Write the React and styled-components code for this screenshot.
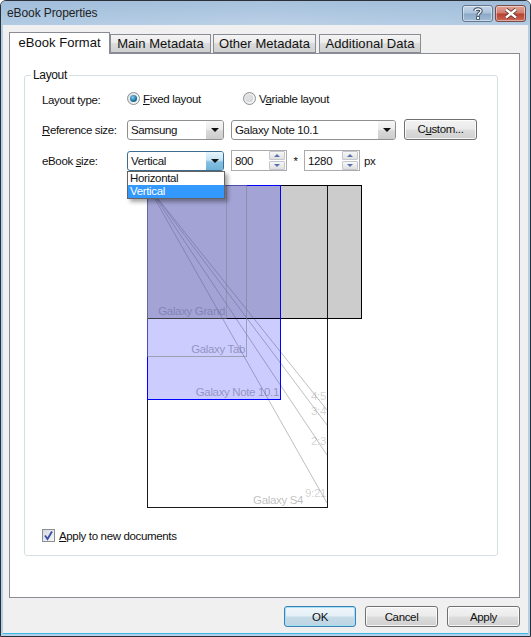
import React from 'react'
import styled, { createGlobalStyle } from 'styled-components'

const GlobalStyle = createGlobalStyle`
  html, body { margin: 0; padding: 0; background: #fff; }
  body { font-family: "Liberation Sans", Arial, sans-serif; font-size: 11.5px; letter-spacing: -0.35px; color: #111; }
  u { text-underline-offset: 1px; }
`

const Window = styled.div`
  width: 531px;
  height: 637px;
  box-sizing: border-box;
  display: flex;
  flex-direction: column;
  border: 1px solid #2b3036;
  border-radius: 6px 6px 0 0;
  background: #b4cfe8;
  overflow: hidden;
`

const TitleBar = styled.div`
  height: 24px;
  flex: none;
  display: flex;
  align-items: flex-start;
  justify-content: space-between;
  padding: 4px 4px 0 6px;
  box-sizing: border-box;
  background: linear-gradient(180deg, rgba(150, 180, 212, 0.5), rgba(190, 212, 232, 0.4)), linear-gradient(90deg, #a9c5e0 0%, #b8cfe5 50%, #a8c4df 100%);
`

const TitleText = styled.span`
  font-size: 12px;
  line-height: 17px;
  letter-spacing: -0.1px;
  color: #222;
`

const TitleButtons = styled.div`
  display: flex;
  gap: 2px;
`

const CaptionButton = styled.div`
  width: 31px;
  height: 17px;
  box-sizing: border-box;
  border: 1px solid ${p => (p.$close ? '#7a4a44' : '#66788c')};
  border-radius: 3px;
  box-shadow: inset 0 0 0 1px rgba(255, 255, 255, 0.45);
  display: flex;
  align-items: center;
  justify-content: center;
  background: ${p =>
    p.$close
      ? 'linear-gradient(180deg, #dfa599 0%, #cf7d6e 48%, #b8402f 52%, #c9695a 100%)'
      : 'linear-gradient(180deg, #c3d6e8 0%, #aac3dc 48%, #8ba8c6 52%, #a3bdd8 100%)'};
`

const Client = styled.div`
  flex: 1;
  min-height: 0;
  display: flex;
  flex-direction: column;
  margin: 0 2px 2px 2px;
  padding: 7px 8px 7px 6px;
  background: #f0f0f0;
  border-bottom: 1px solid #38b6e8;
`

const TabStrip = styled.div`
  display: flex;
  align-items: flex-end;
  height: 21px;
  flex: none;
`

const Tab = styled.div`
  width: ${p => p.$width}px;
  height: ${p => (p.$active ? 22 : 19)}px;
  margin-left: ${p => p.$offset || 0}px;
  margin-bottom: ${p => (p.$active ? -1 : 0)}px;
  padding-bottom: ${p => (p.$active ? 2 : 0)}px;
  box-sizing: border-box;
  display: flex;
  align-items: center;
  justify-content: center;
  position: relative;
  z-index: ${p => (p.$active ? 2 : 0)};
  font-size: 13px;
  letter-spacing: 0.05px;
  color: #111;
  border: 1px solid #898c95;
  border-bottom: ${p => (p.$active ? 'none' : '1px solid #898c95')};
  background: ${p => (p.$active ? '#fff' : 'linear-gradient(180deg, #f4f4f4 0%, #ebebeb 45%, #dcdcdc 50%, #cfcfcf 100%)')};
`

const Panel = styled.div`
  height: 545px;
  flex: none;
  box-sizing: border-box;
  padding: 14px 21px 0 14px;
  background: #fff;
  border: 1px solid #898c95;
`

const Group = styled.fieldset`
  margin: 0;
  padding: 0 0 0 17px;
  height: 488px;
  box-sizing: border-box;
  border: 1px solid #d5dfe5;
  border-radius: 3px;
  min-width: 0;
`

const GroupTitle = styled.legend`
  margin-left: -11px;
  padding: 0 2px;
  font-size: 12px;
  line-height: 14px;
`

const Row = styled.div`
  display: flex;
  align-items: center;
  height: 21px;
  margin-top: ${p => p.$top}px;
`

const Label = styled.div`
  width: 85px;
  flex: none;
  padding-top: ${p => p.$drop || 0}px;
`

const Option = styled.div`
  width: ${p => p.$width}px;
  display: flex;
  align-items: center;
  gap: 3px;
`

const Radio = styled.span`
  width: 13px;
  height: 13px;
  box-sizing: border-box;
  border-radius: 50%;
  border: 1px solid #8a8f96;
  display: flex;
  align-items: center;
  justify-content: center;
  background: linear-gradient(135deg, #ddd, #fafafa);
  &::after {
    content: '';
    width: 7px;
    height: 7px;
    border-radius: 50%;
    background: ${p => (p.$checked ? 'radial-gradient(circle at 40% 35%, #7fd0ef, #1a6d9c 60%, #0d4a78)' : 'radial-gradient(circle at 40% 35%, #e4e4e4, #cfcfcf)')};
  }
`

const Combo = styled.div`
  position: relative;
  width: ${p => p.$width}px;
  height: 20px;
  margin-right: ${p => p.$gap}px;
  box-sizing: border-box;
  flex: none;
  display: flex;
  align-items: center;
  padding-left: 3px;
  background: #fff;
  border: 1px solid ${p => (p.$open ? '#3d6d8f' : '#8e8f8f')};
  border-radius: 3px;
`

const ComboArrow = styled.span`
  position: absolute;
  top: 0;
  right: 0;
  bottom: 0;
  width: 17px;
  border-radius: 0 2px 2px 0;
  display: flex;
  align-items: center;
  justify-content: center;
  background: ${p => (p.$open ? 'linear-gradient(180deg, #e8f5fc 0%, #c4e3f5 45%, #86c0e2 55%, #6fb2da 100%)' : 'linear-gradient(180deg, #f6f6f6 0%, #ececec 45%, #d8d8d8 55%, #cdcdcd 100%)')};
  &::after {
    content: '';
    border-left: 4px solid transparent;
    border-right: 4px solid transparent;
    border-top: 4px solid #111;
  }
`

const DropList = styled.div`
  position: absolute;
  top: 19px;
  left: -1px;
  width: 98px;
  box-sizing: border-box;
  z-index: 5;
  background: #fff;
  border: 1px solid #646464;
  box-shadow: 3px 3px 4px rgba(0, 0, 0, 0.35);
`

const DropItem = styled.div`
  height: 13px;
  line-height: 13px;
  padding-left: 2px;
  color: ${p => (p.$selected ? '#fff' : '#111')};
  background: ${p => (p.$selected ? '#3399ff' : 'transparent')};
`

const PushButton = styled.div`
  width: ${p => p.$width || 73}px;
  height: 21px;
  margin-top: ${p => p.$lift || 0}px;
  box-sizing: border-box;
  flex: none;
  display: flex;
  align-items: center;
  justify-content: center;
  color: #111;
  border: 1px solid ${p => (p.$primary ? '#3c7fb1' : '#707070')};
  border-radius: 3px;
  box-shadow: inset 0 0 0 1px ${p => (p.$primary ? '#a6e0f7' : 'rgba(255, 255, 255, 0.8)')};
  background: ${p => (p.$primary ? 'linear-gradient(180deg, #f0f7fb 0%, #e4eff5 48%, #c6dbe7 52%, #bcd5e3 100%)' : 'linear-gradient(180deg, #f3f3f3 0%, #ebebeb 48%, #dddddd 52%, #cfcfcf 100%)')};
`

const Spin = styled.div`
  width: 56px;
  height: 21px;
  box-sizing: border-box;
  flex: none;
  display: flex;
  align-items: center;
  justify-content: space-between;
  padding: 0 1px 0 3px;
  background: #fff;
  border: 1px solid #ababab;
`

const SpinButtons = styled.div`
  width: 16px;
  display: flex;
  flex-direction: column;
  gap: 1px;
`

const SpinButton = styled.span`
  height: 9px;
  box-sizing: border-box;
  display: flex;
  align-items: center;
  justify-content: center;
  border: 1px solid #c4c7cf;
  border-radius: 1px;
  background: linear-gradient(180deg, #f7f7f7, #e0e0e0);
  &::after {
    content: '';
    border-left: 3px solid transparent;
    border-right: 3px solid transparent;
    ${p => (p.$down ? 'border-top: 3px solid #5a6eb0;' : 'border-bottom: 3px solid #5a6eb0;')}
  }
`

const Times = styled.span`
  width: 17px;
  text-align: center;
  flex: none;
`

const Unit = styled.span`
  margin-left: 4px;
`

const Diagram = styled.svg`
  display: block;
  margin: 14px 0 0 105px;
  font-family: "Liberation Sans", Arial, sans-serif;
  font-size: 11.5px;
  letter-spacing: -0.35px;
  shape-rendering: crispEdges;
`

const Guide = styled.line`
  stroke: #808080;
  stroke-opacity: 0.5;
  shape-rendering: auto;
`

const Note = styled.text`
  fill: ${p => p.$color};
  text-anchor: end;
  shape-rendering: auto;
`

const ApplyRow = styled.div`
  display: flex;
  align-items: center;
  gap: 4px;
  margin-top: 20px;
`

const CheckBox = styled.span`
  width: 13px;
  height: 13px;
  box-sizing: border-box;
  display: flex;
  align-items: center;
  justify-content: center;
  border: 1px solid #8a8f96;
  background: linear-gradient(135deg, #d6d9df, #f6f6f6);
`

const Footer = styled.div`
  display: flex;
  justify-content: flex-end;
  gap: 9px;
  margin-top: 8px;
`

// ratio guide lines, all from the top left corner of the preview
const guides = [
  { name: '4:5', y: 225, labelY: 215 },
  { name: '3:4', y: 240, labelY: 230 },
  { name: '2:3', y: 270, labelY: 260 },
  { name: '9:21', y: 318, labelY: 312 },
]

const Preview = () => (
  <Diagram width="216" height="324" viewBox="0 0 216 324">
    <rect x="0.5" y="0.5" width="180" height="322" fill="#fff" />
    <rect x="0.5" y="0.5" width="214" height="133" fill="#ccc" stroke="#000" />
    <rect x="0.5" y="0.5" width="180" height="322" fill="none" stroke="#000" strokeOpacity="0.9" />
    {guides.map(g => (
      <Guide key={g.name} x1="0" y1="0" x2="180" y2={g.y} />
    ))}
    <rect x="0.5" y="0.5" width="133" height="214" fill="#00f" fillOpacity="0.2" stroke="#00f" />
    <line x1="0" y1="133.5" x2="133" y2="133.5" stroke="#000" strokeOpacity="0.6" />
    <rect x="0.5" y="0.5" width="79" height="133" fill="none" stroke="#808080" strokeOpacity="0.5" />
    <rect x="0.5" y="0.5" width="99" height="171" fill="none" stroke="#808080" strokeOpacity="0.6" />
    <Note x="78" y="130" $color="rgba(90,90,130,0.45)">Galaxy Grand</Note>
    <Note x="98" y="168" $color="rgba(90,90,130,0.5)">Galaxy Tab</Note>
    <Note x="132" y="211" $color="rgba(90,90,130,0.5)">Galaxy Note 10.1</Note>
    <Note x="156" y="319" $color="rgba(128,128,128,0.5)">Galaxy S4</Note>
    {guides.map(g => (
      <Note key={g.name} x="179" y={g.labelY} $color="rgba(128,128,128,0.35)">{g.name}</Note>
    ))}
  </Diagram>
)

const SpinField = ({ value }) => (
  <Spin>
    <span>{value}</span>
    <SpinButtons>
      <SpinButton />
      <SpinButton $down />
    </SpinButtons>
  </Spin>
)

const App = () => (
  <>
    <GlobalStyle />
    <Window>
      <TitleBar>
        <TitleText>eBook Properties</TitleText>
        <TitleButtons>
          <CaptionButton>
            <svg width="10" height="13" viewBox="0 0 10 13">
              <path d="M2 4 C2 1.5 8 1.2 8 4 C8 6 5 6 5 8.5" fill="none" stroke="#3a4a5c" strokeWidth="3.4" />
              <rect x="3.2" y="9.2" width="3.6" height="3.6" fill="#3a4a5c" />
              <path d="M2 4 C2 1.5 8 1.2 8 4 C8 6 5 6 5 8.5" fill="none" stroke="#f2f5f8" strokeWidth="1.5" />
              <rect x="4" y="10" width="2" height="2" fill="#f2f5f8" />
            </svg>
          </CaptionButton>
          <CaptionButton $close>
            <svg width="16" height="11" viewBox="0 0 16 11">
              <path d="M3 1.5 L13 9.5 M13 1.5 L3 9.5" stroke="#5c2a22" strokeWidth="4" />
              <path d="M3 1.5 L13 9.5 M13 1.5 L3 9.5" stroke="#fff" strokeWidth="2.4" />
            </svg>
          </CaptionButton>
        </TitleButtons>
      </TitleBar>
      <Client>
        <TabStrip>
          <Tab $active $width={101}>eBook Format</Tab>
          <Tab $width={101}>Main Metadata</Tab>
          <Tab $width={103} $offset={2}>Other Metadata</Tab>
          <Tab $width={102} $offset={3}>Additional Data</Tab>
        </TabStrip>
        <Panel>
          <Group>
            <GroupTitle>Layout</GroupTitle>
            <Row $top={6}>
              <Label $drop={3}>Layout type:</Label>
              <Option $width={116}>
                <Radio $checked />
                <span><u>F</u>ixed layout</span>
              </Option>
              <Option $width={120}>
                <Radio />
                <span>V<u>a</u>riable layout</span>
              </Option>
            </Row>
            <Row $top={10}>
              <Label><u>R</u>eference size:</Label>
              <Combo $width={97} $gap={7}>
                Samsung
                <ComboArrow />
              </Combo>
              <Combo $width={165} $gap={8}>
                Galaxy Note 10.1
                <ComboArrow />
              </Combo>
              <PushButton $lift={-1}>C<u>u</u>stom...</PushButton>
            </Row>
            <Row $top={10}>
              <Label>eBook <u>s</u>ize:</Label>
              <Combo $width={97} $gap={7} $open>
                Vertical
                <ComboArrow $open />
                <DropList>
                  <DropItem>Horizontal</DropItem>
                  <DropItem $selected>Vertical</DropItem>
                </DropList>
              </Combo>
              <SpinField value="800" />
              <Times>*</Times>
              <SpinField value="1280" />
              <Unit>px</Unit>
            </Row>
            <Preview />
            <ApplyRow>
              <CheckBox>
                <svg width="11" height="11" viewBox="0 0 11 11">
                  <path d="M2 5.5 L4.5 9 L9 1.5" fill="none" stroke="#3c4fa8" strokeWidth="1.8" />
                </svg>
              </CheckBox>
              <span><u>A</u>pply to new documents</span>
            </ApplyRow>
          </Group>
        </Panel>
        <Footer>
          <PushButton $primary $width={72}>OK</PushButton>
          <PushButton>Cancel</PushButton>
          <PushButton>Apply</PushButton>
        </Footer>
      </Client>
    </Window>
  </>
)

export default App
